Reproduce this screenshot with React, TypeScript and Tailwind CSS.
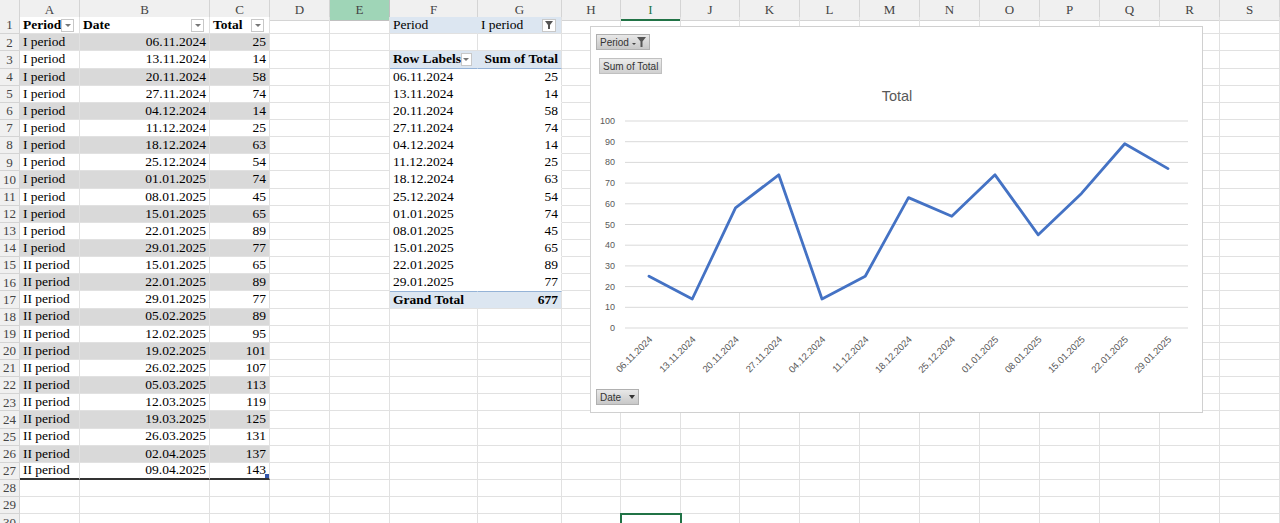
import React from "react";

const cols = ["A","B","C","D","E","F","G","H","I","J","K","L","M","N","O","P","Q","R","S"];
const widths = [60,130,60,60,60,88,84,59,60,59,60,60,60,60,60,60,60,60,60];
const dates1 = ["06.11.2024","13.11.2024","20.11.2024","27.11.2024","04.12.2024","11.12.2024","18.12.2024","25.12.2024","01.01.2025","08.01.2025","15.01.2025","22.01.2025","29.01.2025"];
const vals1 = [25,14,58,74,14,25,63,54,74,45,65,89,77];
const dates2 = ["15.01.2025","22.01.2025","29.01.2025","05.02.2025","12.02.2025","19.02.2025","26.02.2025","05.03.2025","12.03.2025","19.03.2025","26.03.2025","02.04.2025","09.04.2025"];
const vals2 = [65,89,77,89,95,101,107,113,119,125,131,137,143];
const data = [...dates1.map((d,i)=>["I period",d,vals1[i]]), ...dates2.map((d,i)=>["II period",d,vals2[i]])] as [string,string,number][];

const Drop = () => (
  <span className="ml-auto mr-[2px] w-[13px] h-[13px] border border-[#c8c8c8] bg-white flex items-center justify-center">
    <span className="w-0 h-0 border-l-[3px] border-r-[3px] border-t-[3px] border-l-transparent border-r-transparent border-t-[#777]" />
  </span>
);
const FilterBtn = () => (
  <span className="ml-auto mr-[2px] w-[14px] h-[13px] border border-[#c8c8c8] bg-white flex items-center justify-center">
    <svg width="9" height="8" viewBox="0 0 9 8"><path d="M0 0h8L5 4v4H3V4z" fill="#555"/></svg>
  </span>
);

function cellContent(r: number, c: number): { node?: React.ReactNode; cls?: string } {
  if (c <= 2 && r >= 1 && r <= 27) {
    const band = r >= 2 && r % 2 === 0 ? "bg-[#d9d9d9]" : "bg-white";
    const bottom = r === 27 ? " border-b-[#333] border-b-2" : "";
    if (r === 1) {
      const label = ["Period","Date","Total"][c];
      return { cls: "bg-white font-bold", node: <><span>{label}</span><Drop /></> };
    }
    const row = data[r - 2];
    if (c === 0) return { cls: band + bottom, node: <span>{row[0]}</span> };
    if (c === 1) return { cls: band + bottom + " justify-end", node: <span>{row[1]}</span> };
    return { cls: band + bottom + " justify-end relative", node: <><span>{row[2]}</span>{r===27 && <span className="absolute right-0 bottom-0 w-[4px] h-[4px] bg-[#3355aa]" />}</> };
  }
  if (c === 5 || c === 6) {
    const blue = "bg-[#dce6f1]";
    const nr = c === 5 ? " border-r-transparent" : "";
    if (r === 1) return c === 5 ? { cls: blue + nr, node: <span>Period</span> } : { cls: blue, node: <><span>I period</span><FilterBtn /></> };
    if (r === 3) return c === 5 ? { cls: blue + nr + " font-bold border-b-[#95b3d7]", node: <><span>Row Labels</span><Drop /></> } : { cls: blue + " font-bold justify-end border-b-[#95b3d7]", node: <span>Sum of Total</span> };
    if (r >= 4 && r <= 16) return c === 5 ? { cls: "bg-white border-b-transparent" + nr, node: <span>{dates1[r-4]}</span> } : { cls: "bg-white justify-end border-b-transparent", node: <span>{vals1[r-4]}</span> };
    if (r === 17) return c === 5 ? { cls: blue + nr + " font-bold border-t border-t-[#95b3d7]", node: <span>Grand Total</span> } : { cls: blue + " font-bold justify-end border-t border-t-[#95b3d7]", node: <span>677</span> };
  }
  return {};
}

const W = 613, H = 387;
const y0 = 301, yStep = 20.7;
const xs = vals1.map((_, i) => 58 + i * 43.25);

function Chart() {
  const pts = vals1.map((v, i) => `${xs[i]},${y0 - v * yStep / 10}`).join(" ");
  return (
    <div className="absolute left-[590px] top-[26px] w-[613px] h-[387px] bg-white border border-[#d0d0d0]" style={{ fontFamily: "'Liberation Sans', Arial, sans-serif" }}>
      <div className="absolute left-[5px] top-[7px] h-[16px] px-[3px] flex items-center bg-gradient-to-b from-[#e8e8e8] to-[#c8c8c8] border border-[#b0b0b0] text-[10px] text-[#333]">
        Period <svg className="ml-[3px]" width="14" height="10" viewBox="0 0 14 10"><path d="M0 6l2 2 2-2z" fill="#444"/><path d="M5 0h9L10.5 4.5V10h-2V4.5z" fill="#555"/></svg>
      </div>
      <div className="absolute left-[8px] top-[31px] h-[16px] px-[3px] flex items-center bg-gradient-to-b from-[#ececec] to-[#d0d0d0] border border-[#c0c0c0] text-[10px] text-[#333]">Sum of Total</div>
      <div className="absolute left-[5px] top-[362px] h-[16px] px-[3px] flex items-center bg-gradient-to-b from-[#e8e8e8] to-[#c8c8c8] border border-[#b0b0b0] text-[10px] text-[#333]">
        Date <span className="ml-[8px] w-0 h-0 border-l-[3.5px] border-r-[3.5px] border-t-[4px] border-l-transparent border-r-transparent border-t-[#333]" />
      </div>
      <svg width={W} height={H} className="block">
        <text x="306" y="74" textAnchor="middle" fontSize="14.5" fill="#595959" fontFamily="'Liberation Sans', Arial, sans-serif">Total</text>
        {Array.from({ length: 11 }, (_, k) => {
          const y = y0 - k * yStep;
          return (
            <g key={k}>
              <line x1="34" x2="597" y1={y} y2={y} stroke="#d9d9d9" strokeWidth="1" />
              <text x="24" y={y + 3} textAnchor="end" fontSize="9" fill="#595959" fontFamily="'Liberation Sans', Arial, sans-serif">{k * 10}</text>
            </g>
          );
        })}
        <polyline points={pts} fill="none" stroke="#4472c4" strokeWidth="2.8" strokeLinejoin="round" strokeLinecap="round" />
        {dates1.map((d, i) => (
          <text key={d} x={xs[i] + 4} y={313} textAnchor="end" fontSize="9.5" fill="#595959" fontFamily="'Liberation Sans', Arial, sans-serif" transform={`rotate(-45 ${xs[i] + 4} 313)`}>{d}</text>
        ))}
      </svg>
    </div>
  );
}

export default function App() {
  const rows = Array.from({ length: 30 }, (_, i) => i + 1);
  const tmpl = `20px ${widths.map(w => w + "px").join(" ")}`;
  return (
    <div className="relative w-[1280px] h-[523px] overflow-hidden bg-white" style={{ fontFamily: "'Liberation Serif', 'Times New Roman', serif" }}>
      <div className="grid" style={{ gridTemplateColumns: tmpl, gridAutoRows: "17.15px" }}>
        <div className="h-[21px] bg-[#f0f0f0] border-r border-b border-[#d4d4d4]" />
        {cols.map((c) => (
          <div key={c} className={`h-[21px] flex items-center justify-center text-[13px] text-[#444] border-r border-b ${c === "E" ? "bg-[#9fd5b7] border-[#c0c0c0]" : "bg-[#f0f0f0] border-[#d4d4d4]"} ${c === "I" ? "border-b-2 border-b-[#217346] text-[#217346]" : ""}`}>{c}</div>
        ))}
        {rows.map(r => (
          <React.Fragment key={r}>
            <div className="bg-[#f0f0f0] border-r border-b border-[#d4d4d4] text-[13px] text-[#444] flex items-center justify-center">{r}</div>
            {cols.map((c, ci) => {
              const { node, cls } = cellContent(r, ci);
              const active = c === "I" && r === 30 ? " outline outline-2 outline-[#217346] -outline-offset-1" : "";
              return (
                <div key={c} className={`flex items-center px-[3px] text-[13.5px] text-black whitespace-nowrap overflow-visible border-r border-b border-[#e1e1e1] ${cls ?? ""}${active}`}>
                  {node}
                </div>
              );
            })}
          </React.Fragment>
        ))}
      </div>
      <Chart />
    </div>
  );
}
